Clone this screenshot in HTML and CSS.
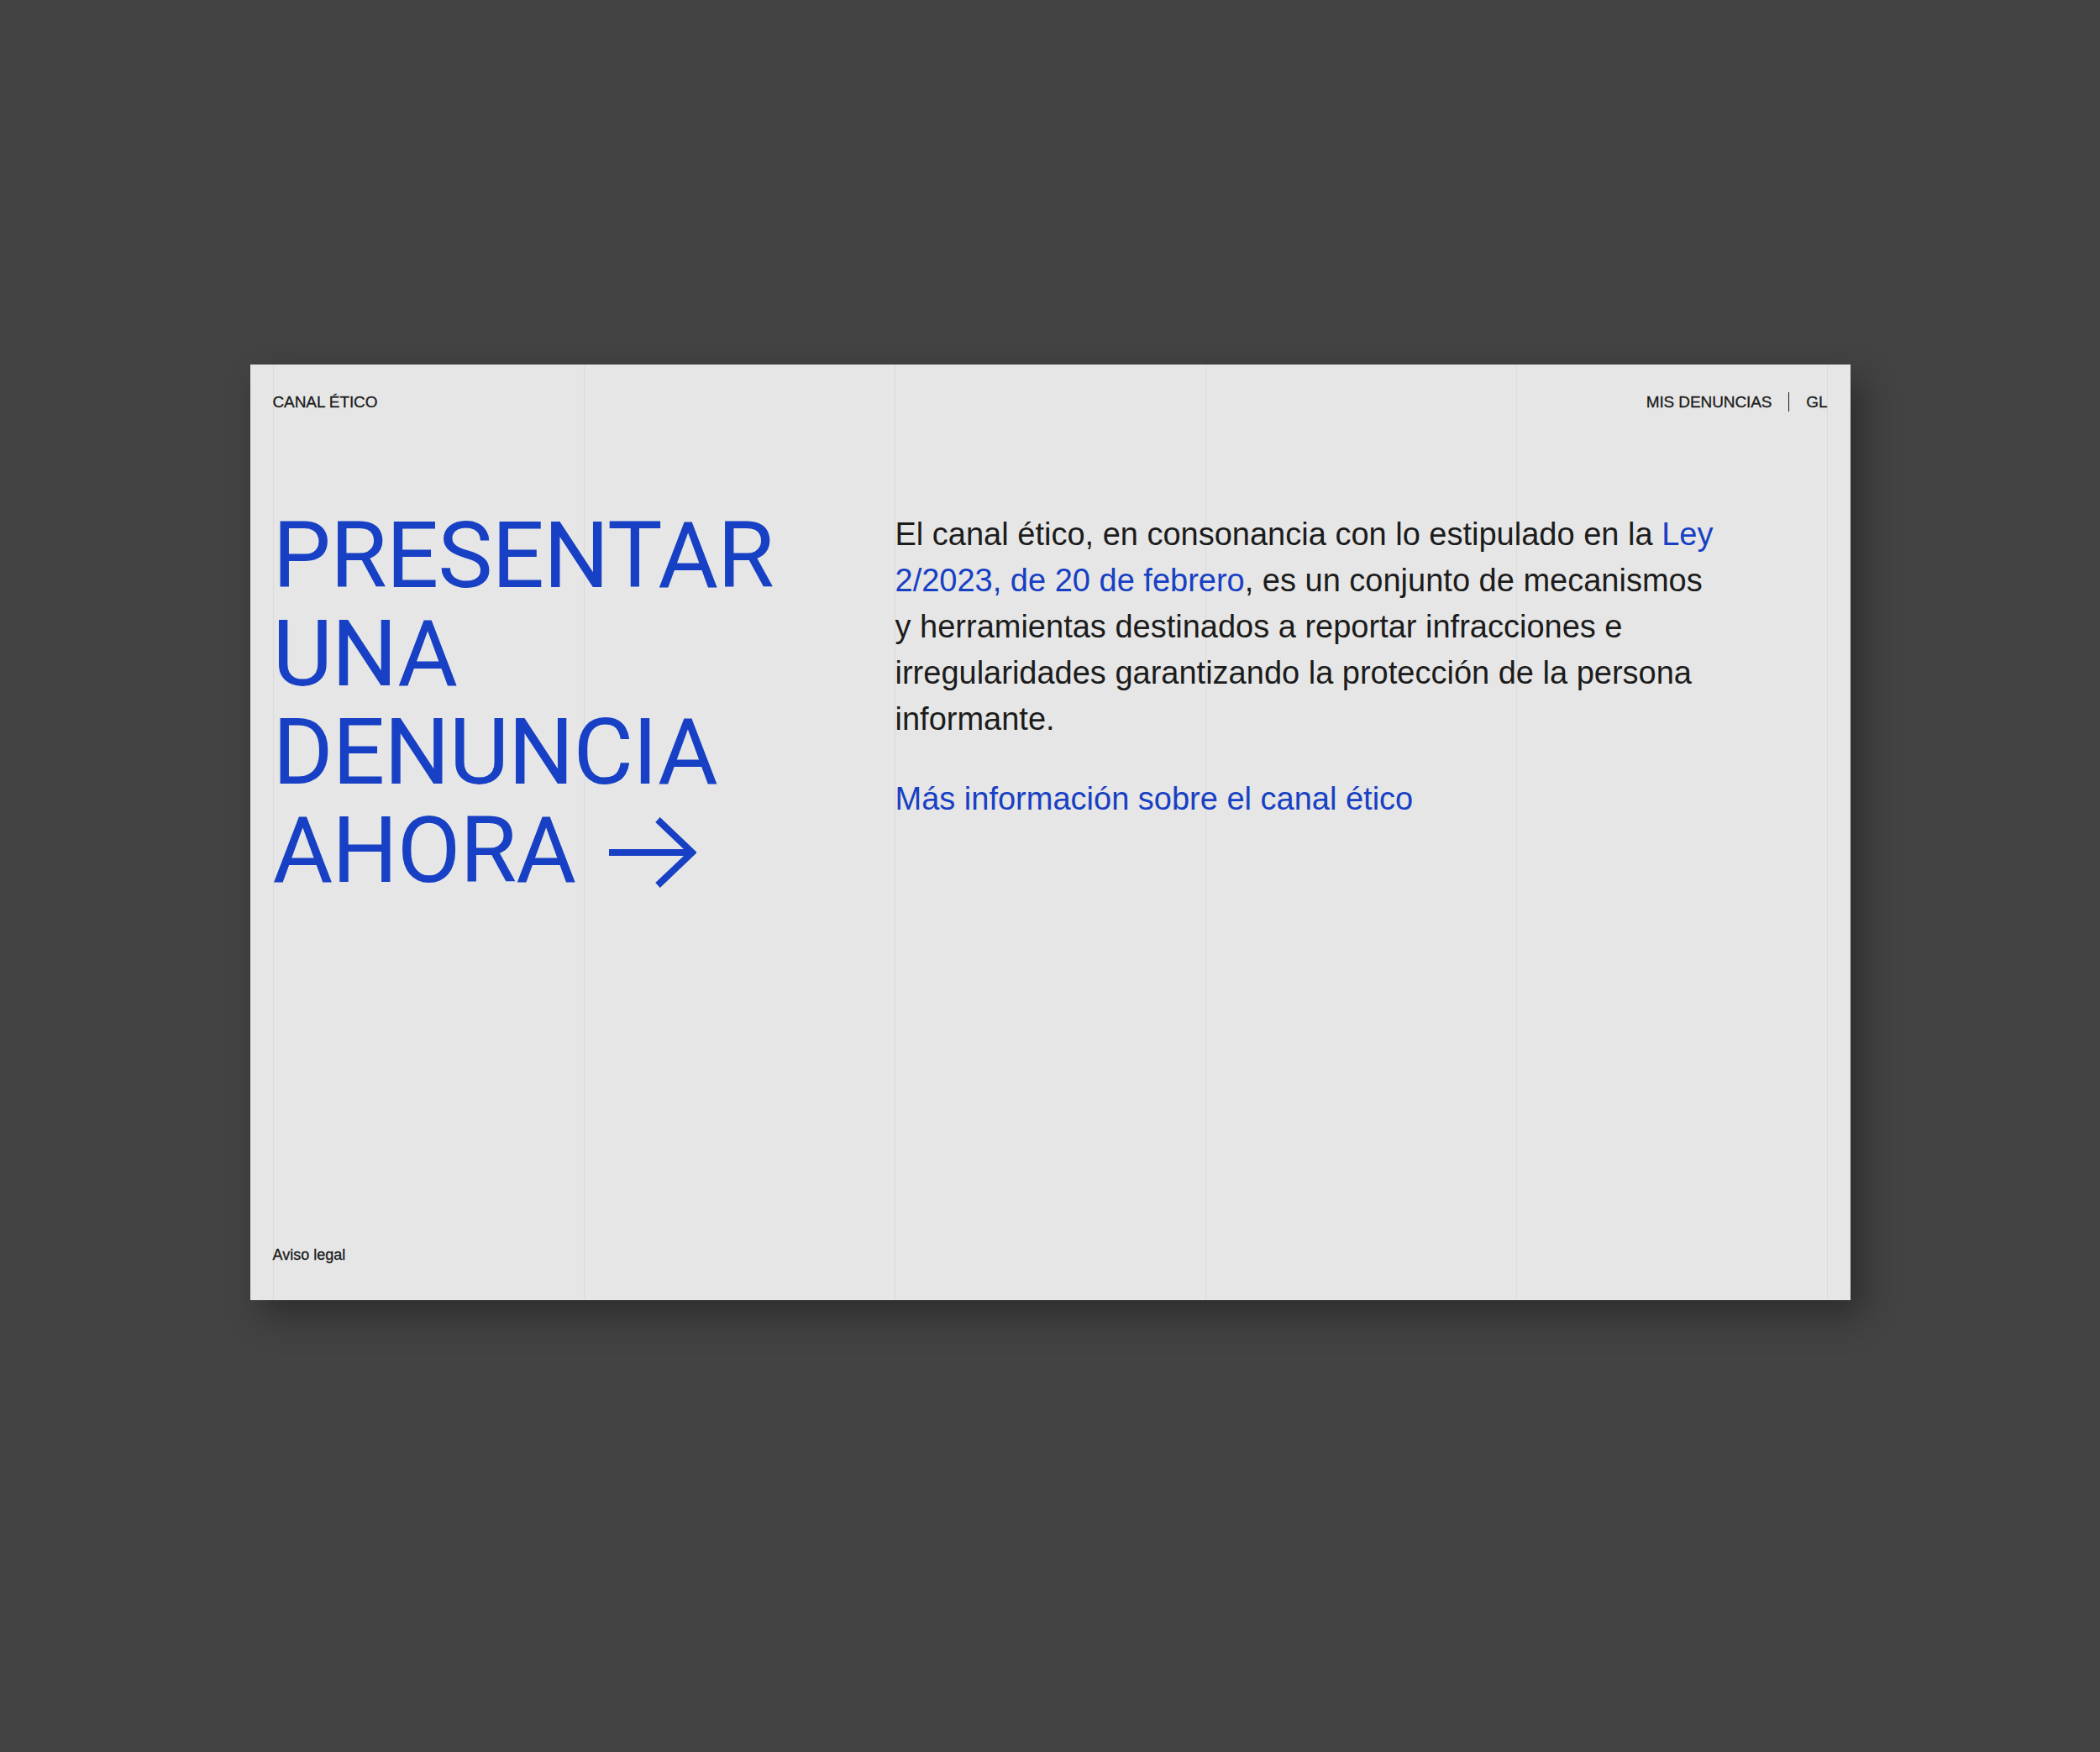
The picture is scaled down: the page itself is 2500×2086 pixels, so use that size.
FILE: index.html
```html
<!DOCTYPE html>
<html lang="es">
<head>
<meta charset="utf-8">
<title>Canal ético</title>
<link rel="stylesheet" href="styles.css">
</head>
<body>
<div class="stage">
  <div class="card">
    <div class="frame">
      <header class="topbar">
        <a class="brand" href="#">CANAL ÉTICO</a>
        <nav class="nav">
          <a href="#">MIS DENUNCIAS</a>
          <span class="sep"></span>
          <a href="#">GL</a>
        </nav>
      </header>
      <main class="main">
        <a class="cta" href="#">PRESENTAR<br>UNA<br>DENUNCIA<br>AHORA<svg class="arrow" viewBox="0 0 104 84" width="104" height="84" aria-hidden="true"><path d="M0 42H99M58 3L99 42L58 81" fill="none" stroke="currentColor" stroke-width="8"/></svg></a>
        <div class="intro">
          <p class="lead">El canal ético, en consonancia con lo estipulado en la <a href="#">Ley 2/2023, de 20 de febrero</a>, es un conjunto de mecanismos y herramientas destinados a reportar infracciones e irregularidades garantizando la protección de la persona informante.</p>
          <a class="more" href="#">Más información sobre el canal ético</a>
        </div>
      </main>
      <footer class="foot">
        <a href="#">Aviso legal</a>
      </footer>
    </div>
  </div>
</div>
</body>
</html>
```

FILE: styles.css
```css
html, body {
  margin: 0;
  padding: 0;
}

body {
  background: #434343;
  font-family: "Liberation Sans", Arial, sans-serif;
  color: #1c1c1c;
}

a {
  color: inherit;
  text-decoration: none;
}

.stage {
  width: 2500px;
  height: 2086px;
  padding-top: 434px;
  box-sizing: border-box;
}

.card {
  width: 1905px;
  height: 1114px;
  margin: 0 auto;
  padding: 0 27px;
  box-sizing: border-box;
  background: #e6e6e6;
  box-shadow: 14px 18px 40px rgba(0, 0, 0, 0.35);
}

.frame {
  height: 100%;
  width: 1851px;
  display: flex;
  flex-direction: column;
  background-image: repeating-linear-gradient(to right, #dadada 0, #dadada 1px, transparent 1px, transparent 370px);
}

.topbar {
  display: flex;
  justify-content: space-between;
  align-items: center;
  padding-top: 33px;
  font-size: 19px;
  line-height: 19px;
  letter-spacing: -0.1px;
  -webkit-text-stroke: 0.3px #1a1a1a;
  color: #1a1a1a;
}

.nav {
  display: flex;
  align-items: center;
  gap: 20px;
}

.sep {
  width: 1px;
  height: 23px;
  background: #1a1a1a;
}

.main {
  display: grid;
  grid-template-columns: repeat(5, 370px);
  padding-top: 113px;
}

.cta {
  grid-column: 1 / 3;
  font-family: Roboto, "Liberation Sans", sans-serif;
  font-size: 110px;
  line-height: 117px;
  letter-spacing: -1px;
  color: #1740c4;
}

.arrow {
  display: inline-block;
  vertical-align: baseline;
  margin-left: 40px;
  position: relative;
  top: 7px;
}

.intro {
  grid-column: 3 / 6;
  padding-top: 6px;
  padding-left: 1px;
}

.lead {
  margin: 0;
  width: 985px;
  font-size: 38px;
  line-height: 55px;
  color: #1c1c1c;
}

.lead a,
.more {
  color: #1740c4;
}

.more {
  display: block;
  margin-top: 40px;
  font-size: 38px;
  line-height: 55px;
}

.foot {
  margin-top: auto;
  padding-bottom: 45px;
  font-size: 18px;
  line-height: 18px;
  -webkit-text-stroke: 0.3px #1a1a1a;
  color: #1a1a1a;
}
```
